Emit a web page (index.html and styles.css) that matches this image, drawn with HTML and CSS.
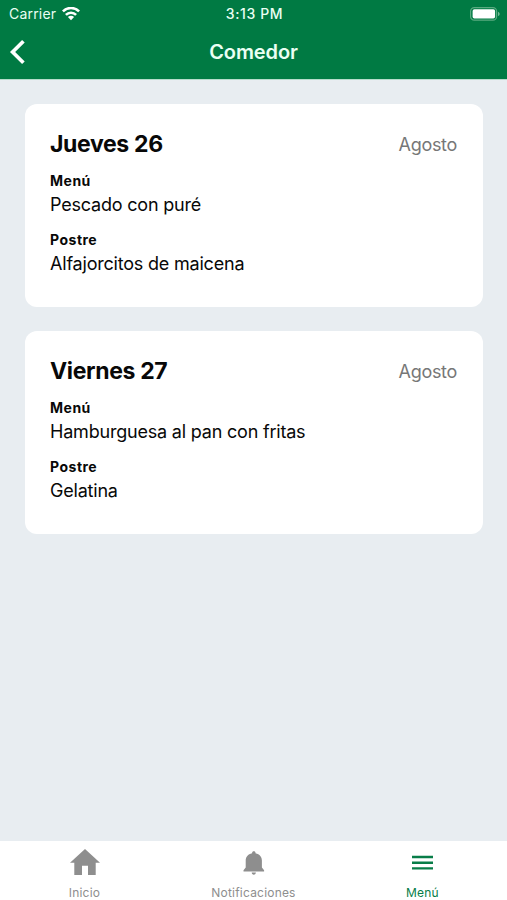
FILE: index.html
```html
<!DOCTYPE html>
<html lang="es">
<head>
<meta charset="utf-8">
<title>Comedor</title>
<link rel="stylesheet" href="styles.css">
</head>
<body>
<header class="header">
  <div class="status">
    <div class="carrier"><span class="carrier-name">Carrier</span>
      <svg class="wifi" viewBox="0 0 18 14" width="18" height="14"><g fill="none" stroke="#fff" stroke-width="2.6"><path d="M.9 4.400C5.400-.1 12.600-.1 17.100 4.400"/><path d="M3.900 7.900c2.900-2.900 7.300-2.900 10.200 0"/></g><path fill="#fff" d="M5.900 10c1.800-1.700 4.400-1.700 6.200 0L9 13.200z"/></svg>
    </div>
    <span class="time">3:13 PM</span>
    <svg class="battery" viewBox="0 0 30 14" width="30" height="14"><rect x=".6" y=".6" width="26" height="12.600" rx="3.700" fill="none" stroke="#59aa80" stroke-width="1.200"/><rect x="2.600" y="2.200" width="22.500" height="9.400" rx="1.800" fill="#fff"/><path d="M28 4.800c2.200.8 2.200 3.400 0 4.200z" fill="#73b995"/></svg>
  </div>
  <div class="nav">
    <svg class="back" viewBox="0 0 18 28" width="18" height="28"><path d="M15.400 3.200 4.600 14l10.800 10.800" fill="none" stroke="#fff" stroke-width="3.700"/></svg>
    <h1 class="title">Comedor</h1>
  </div>
</header>
<main class="content">
  <article class="card">
    <div class="card-head"><h2 class="day">Jueves 26</h2><span class="month">Agosto</span></div>
    <h3 class="label">Menú</h3><p class="dish">Pescado con puré</p>
    <h3 class="label">Postre</h3><p class="dish">Alfajorcitos de maicena</p>
  </article>
  <article class="card">
    <div class="card-head"><h2 class="day">Viernes 27</h2><span class="month">Agosto</span></div>
    <h3 class="label">Menú</h3><p class="dish">Hamburguesa al pan con fritas</p>
    <h3 class="label">Postre</h3><p class="dish">Gelatina</p>
  </article>
</main>
<nav class="tabs">
  <a class="tab"><svg class="icon" viewBox="0 0 30 28" width="30" height="28"><path fill="currentColor" d="M15 1 30 14.800h-4.300V27H18v-9.200h-6V27H4.300V14.800H0z"/></svg><span>Inicio</span></a>
  <a class="tab"><svg class="icon" viewBox="0 0 22 28" width="22" height="28"><path fill="currentColor" d="M10.800 3.200c1 0 1.700.7 1.700 1.500v.5c4.300.9 6.400 3.700 6.400 7.300v7l2.200 2.800v1.200H.5v-1.200l2.200-2.800v-7c0-3.600 2.100-6.400 6.400-7.300v-.5c0-.8.700-1.500 1.700-1.500zM8.700 24.600h4.200c-.1 1.300-.9 2.100-2.100 2.100s-2-.8-2.100-2.100z"/></svg><span>Notificaciones</span></a>
  <a class="tab active"><svg class="icon" viewBox="0 0 22 28" width="22" height="28"><path fill="currentColor" d="M0 7.800h21v2.400H0zm0 5.700h21v2.400H0zm0 5.700h21v2.400H0z"/></svg><span>Menú</span></a>
</nav>
</body>
</html>
```
FILE: styles.css
```css
* { box-sizing: border-box; }
body {
  margin: 0;
  height: 900px;
  display: flex;
  flex-direction: column;
  background: #e8edf1;
  color: #080808;
  font-family: Inter, sans-serif;
}
h1, h2, h3, p { margin: 0; }
svg { display: block; }
.header {
  height: 80px;
  background: #007a43;
  border-bottom: 1px solid #b5dccb;
  color: #eafff3;
}
.status {
  height: 27px;
  padding: 0 7px 0 9px;
  display: grid;
  grid-template-columns: 1fr auto 1fr;
  align-items: center;
}
.carrier { display: flex; align-items: center; gap: 6px; }
.carrier-name { font-size: 14px; letter-spacing: 0.2px; }
.time { font-size: 14px; font-weight: 500; letter-spacing: 0.6px; }
.battery { justify-self: end; }
.nav {
  height: 50px;
  padding: 0 8px;
  display: grid;
  grid-template-columns: 1fr auto 1fr;
  align-items: center;
}
.title { font-size: 20px; line-height: 24px; font-weight: 600; letter-spacing: -0.1px; }
.content {
  flex: 1;
  padding: 24px 24px 0 25px;
  display: flex;
  flex-direction: column;
  gap: 24.5px;
}
.card {
  height: 202.5px;
  padding: 25px;
  border-radius: 12px;
  background: #fff;
}
.card-head {
  height: 30px;
  margin-bottom: 12px;
  display: flex;
  justify-content: space-between;
  align-items: center;
}
.day { font-size: 23px; line-height: 30px; font-weight: 700; letter-spacing: -0.35px; }
.month { font-size: 18px; line-height: 24px; padding: 2px 1px 0 0; color: #777; letter-spacing: -0.3px; }
.label { font-size: 14px; line-height: 20px; font-weight: 700; letter-spacing: 0.5px; }
.dish { height: 38px; margin-bottom: 0.6px; font-size: 18px; line-height: 28px; letter-spacing: -0.2px; }
.tabs {
  height: 59px;
  padding-top: 7px;
  display: grid;
  grid-template-columns: repeat(3, 1fr);
  background: #fff;
  color: #8e8e8e;
}
.tab {
  display: flex;
  flex-direction: column;
  align-items: center;
  gap: 9px;
  font-size: 12px;
  line-height: 16px;
  letter-spacing: 0.2px;
}
.active { color: #087d48; }
```
